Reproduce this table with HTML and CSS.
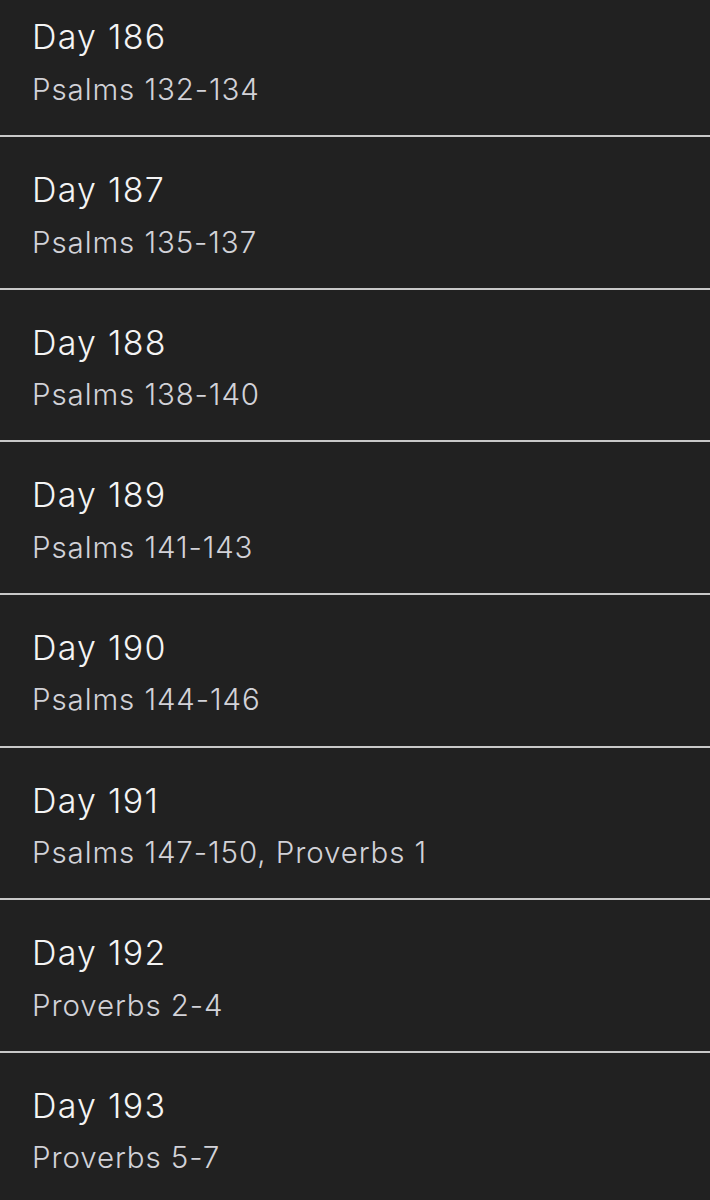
FILE: index.html
```html
<!DOCTYPE html>
<html lang="en">
<head>
<meta charset="utf-8">
<title>Reading plan</title>
<link rel="stylesheet" href="styles.css">
</head>
<body>
<ul class="plan">
  <li class="day"><div class="day-title">Day 186</div><div class="day-reading">Psalms 132-134</div></li>
  <li class="day"><div class="day-title">Day 187</div><div class="day-reading">Psalms 135-137</div></li>
  <li class="day"><div class="day-title">Day 188</div><div class="day-reading">Psalms 138-140</div></li>
  <li class="day"><div class="day-title">Day 189</div><div class="day-reading">Psalms 141-143</div></li>
  <li class="day"><div class="day-title">Day 190</div><div class="day-reading">Psalms 144-146</div></li>
  <li class="day"><div class="day-title">Day 191</div><div class="day-reading">Psalms 147-150, Proverbs 1</div></li>
  <li class="day"><div class="day-title">Day 192</div><div class="day-reading">Proverbs 2-4</div></li>
  <li class="day"><div class="day-title">Day 193</div><div class="day-reading">Proverbs 5-7</div></li>
</ul>
</body>
</html>
```
FILE: styles.css
```css
html, body {
  margin: 0;
  padding: 0;
  background: #212121;
  overflow: hidden;
}
body {
  font-family: Inter, "Noto Sans", sans-serif;
}
.plan {
  list-style: none;
  margin: -15.67px 0 0 0;
  padding: 0;
}
.day {
  display: flex;
  flex-direction: column;
  height: 150.67px;
  box-sizing: content-box;
  padding: 0 0 0 32px;
  border-bottom: 2px solid #c8c8c8;
}
.day-title {
  margin-top: 33px;
  font-size: 34px;
  line-height: 40px;
  letter-spacing: 1.25px;
  color: #f4f4f4;
  font-weight: 300;
}
.day-reading {
  margin-top: 13.5px;
  font-size: 29.5px;
  line-height: 36px;
  letter-spacing: 0.9px;
  color: #d2d2d8;
  font-weight: 300;
}
```
